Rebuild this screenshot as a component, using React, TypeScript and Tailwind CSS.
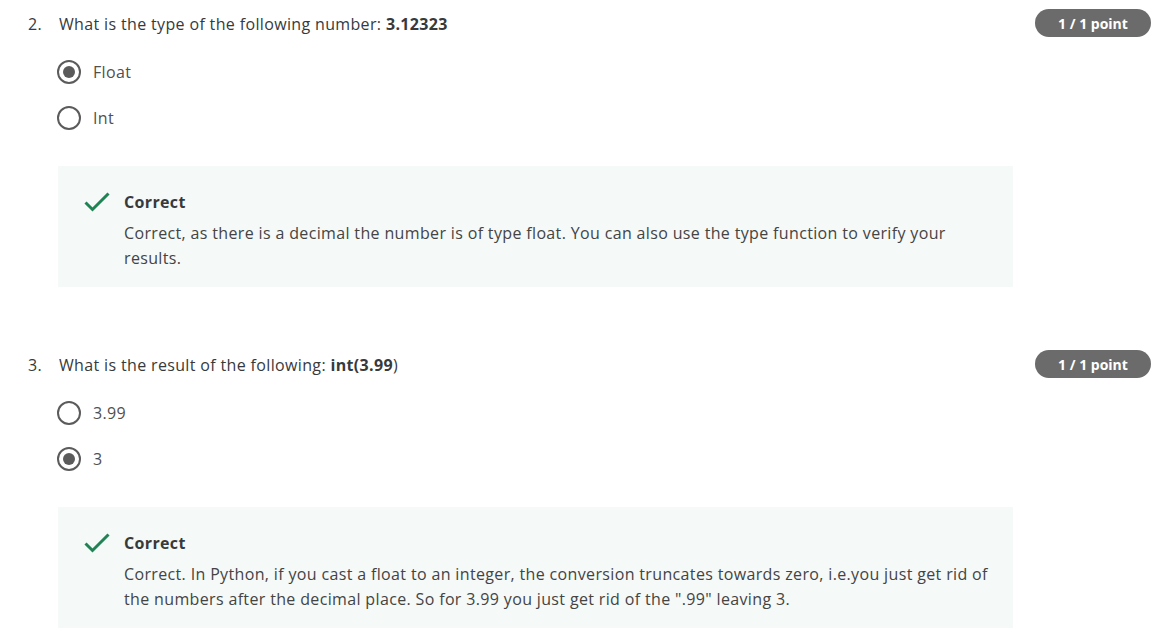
import React from "react";

function Radio({ checked }: { checked: boolean }) {
  return (
    <span className="flex h-[24px] w-[24px] shrink-0 items-center justify-center rounded-full border-2 border-[#5b5b5b] bg-white">
      {checked && <span className="h-[12px] w-[12px] rounded-full bg-[#5b5b5b]" />}
    </span>
  );
}

function Check() {
  return (
    <svg width="26" height="20" viewBox="0 0 26 20" className="shrink-0">
      <path d="M1.5 10.5 L8.5 17.5 L24.5 1.5" fill="none" stroke="#1f8354" strokeWidth="3" />
    </svg>
  );
}

type Q = {
  num: string;
  pre: string;
  bold: string;
  post?: string;
  options: { label: string; checked: boolean }[];
  feedback: string[];
};

function Question({ q }: { q: Q }) {
  return (
    <div className="flex flex-col">
      <div className="flex h-[28px] items-center justify-between">
        <div className="flex items-center pt-[1px] text-[16px] tracking-[0.35px] text-[#373a3c]">
          <span className="w-[31px]">{q.num}</span>
          <span>
            {q.pre}
            <span className="font-bold">{q.bold}</span>
            {q.post}
          </span>
        </div>
        <span className="flex h-[28px] w-[116px] items-center justify-center rounded-full bg-[#6b6b6b] text-[14px] font-bold text-white">
          1 / 1 point
        </span>
      </div>
      <div className="ml-[29px] mt-[12px] flex flex-col">
        {q.options.map((o) => (
          <div key={o.label} className="flex h-[46px] items-center gap-[12px]">
            <Radio checked={o.checked} />
            <span className="text-[16px] tracking-[0.35px] text-[#505050]">{o.label}</span>
          </div>
        ))}
      </div>
      <div className="ml-[30px] mt-[25px] mr-[138px] flex h-[121px] gap-[14px] bg-[#f5f9f8] pl-[26px] pt-[24px]">
        <div className="pt-[2px]">
          <Check />
        </div>
        <div className="flex flex-col tracking-[0.35px]">
          <div className="h-[24px] leading-[24px] text-[16px] font-bold text-[#373a3c]">Correct</div>
          <div className="mt-[7px] text-[16px] leading-[25px] text-[#444]">
            {q.feedback.map((l) => (
              <div key={l}>{l}</div>
            ))}
          </div>
        </div>
      </div>
    </div>
  );
}

export default function App() {
  const qs: Q[] = [
    {
      num: "2.",
      pre: "What is the type of the following number: ",
      bold: "3.12323",
      options: [
        { label: "Float", checked: true },
        { label: "Int", checked: false },
      ],
      feedback: [
        "Correct, as there is a decimal the number is of type float. You can also use the type function to verify your",
        "results.",
      ],
    },
    {
      num: "3.",
      pre: "What is the result of the following: ",
      bold: "int(3.99",
      post: ")",
      options: [
        { label: "3.99", checked: false },
        { label: "3", checked: true },
      ],
      feedback: [
        "Correct. In Python, if you cast a float to an integer, the conversion truncates towards zero, i.e.you just get rid of",
        'the numbers after the decimal place. So for 3.99 you just get rid of the ".99" leaving 3.',
      ],
    },
  ];
  return (
    <div
      className="flex h-[637px] w-[1156px] flex-col gap-[63px] overflow-hidden bg-white pl-[28px] pr-[5px] pt-[9px]"
      style={{ fontFamily: '"Open Sans", sans-serif' }}
    >
      {qs.map((q) => (
        <Question key={q.num} q={q} />
      ))}
    </div>
  );
}
